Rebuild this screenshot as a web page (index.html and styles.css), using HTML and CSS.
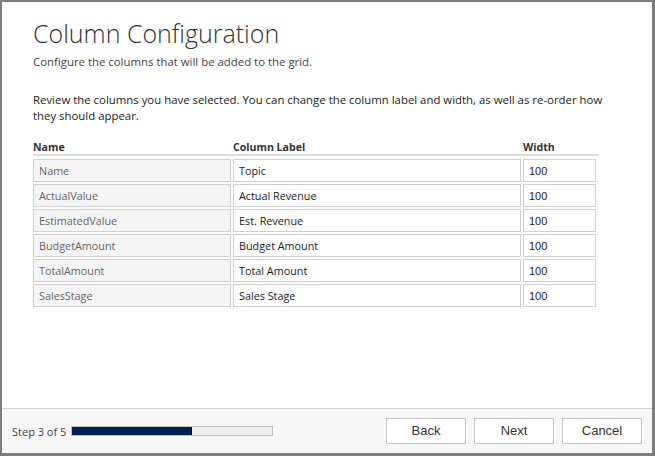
FILE: index.html
```html
<!DOCTYPE html>
<html>
<head>
<meta charset="utf-8">
<link rel="stylesheet" href="styles.css">
</head>
<body>
<div class="dialog">
  <div class="content">
    <h1 class="title">Column Configuration</h1>
    <p class="subtitle">Configure the columns that will be added to the grid.</p>
    <p class="intro">Review the columns you have selected. You can change the column label and width, as well as re-order how they should appear.</p>
    <div class="grid">
      <div class="head">
        <div class="h-name">Name</div>
        <div class="h-label">Column Label</div>
        <div class="h-width">Width</div>
      </div>
      <div class="row"><div class="cell name">Name</div><div class="cell label">Topic</div><div class="cell width">100</div></div>
      <div class="row"><div class="cell name">ActualValue</div><div class="cell label">Actual Revenue</div><div class="cell width">100</div></div>
      <div class="row"><div class="cell name">EstimatedValue</div><div class="cell label">Est. Revenue</div><div class="cell width">100</div></div>
      <div class="row"><div class="cell name">BudgetAmount</div><div class="cell label">Budget Amount</div><div class="cell width">100</div></div>
      <div class="row"><div class="cell name">TotalAmount</div><div class="cell label">Total Amount</div><div class="cell width">100</div></div>
      <div class="row"><div class="cell name">SalesStage</div><div class="cell label">Sales Stage</div><div class="cell width">100</div></div>
    </div>
  </div>
  <div class="footer">
    <span class="step">Step 3 of 5</span>
    <div class="progress"><div class="fill" style="width:60%"></div></div>
    <div class="buttons">
      <button class="btn">Back</button>
      <button class="btn">Next</button>
      <button class="btn">Cancel</button>
    </div>
  </div>
</div>
</body>
</html>
```
FILE: styles.css
```css
html, body {
  margin: 0;
  padding: 0;
  height: 100%;
}
body {
  background: #8c8c8c;
  font-family: "Open Sans", "Noto Sans", sans-serif;
}
.dialog {
  box-sizing: border-box;
  height: 456px;
  width: 655px;
  border-style: solid;
  border-color: #7d7d7d;
  border-width: 2px 3px 3px 2px;
  background: #fff;
  display: flex;
  flex-direction: column;
}
.content {
  flex: 1;
  padding: 14px 31px 0 31px;
}
.title {
  margin: 0;
  font-weight: 300;
  font-size: 25px;
  line-height: 34px;
  color: #333;
}
.subtitle {
  margin: 4px 0 0 0;
  font-size: 11.4px;
  line-height: 16px;
  color: #444;
}
.intro {
  margin: 22px 0 0 0;
  font-size: 11.4px;
  line-height: 16px;
  color: #222;
}
.grid {
  margin-top: 16px;
  width: 566px;
}
.head {
  display: grid;
  grid-template-columns: 200px 290px 76px;
  font-size: 10.6px;
  font-weight: 700;
  color: #333;
  line-height: 14px;
  border-bottom: 2px solid #ddd;
  margin-bottom: 3px;
}
.row {
  display: grid;
  grid-template-columns: 198px 288px 73px;
  column-gap: 2px;
  margin-bottom: 2px;
}
.cell {
  box-sizing: border-box;
  height: 23px;
  border: 1px solid #cfcfcf;
  font-size: 10.8px;
  line-height: 21px;
  padding-left: 5px;
  color: #222;
}
.cell.name {
  background: #f4f4f4;
  color: #666;
}
.cell.width {
  font-family: "Liberation Sans", Arial, sans-serif;
  font-size: 11px;
  line-height: 20px;
  padding-top: 1px;
}
.footer {
  height: 44px;
  border-top: 1px solid #cfcfcf;
  background: #f7f7f7;
  display: flex;
  align-items: center;
  padding: 0 10px 0 10px;
}
.step {
  font-size: 11px;
  color: #444;
  margin-right: 5px;
}
.progress {
  box-sizing: border-box;
  width: 202px;
  height: 10px;
  border: 1px solid #bdbdbd;
  background: #efefef;
}
.fill {
  height: 100%;
  background: #002050;
  border-right: 1px solid #000;
  box-sizing: border-box;
}
.buttons {
  margin-left: auto;
  display: flex;
  gap: 8px;
  margin-top: -1px;
}
.btn {
  width: 80px;
  height: 26px;
  background: #fff;
  border: 1px solid #c8c8c8;
  font-family: "Liberation Sans", Arial, sans-serif;
  font-size: 13px;
  color: #333;
  padding: 0;
}
```
